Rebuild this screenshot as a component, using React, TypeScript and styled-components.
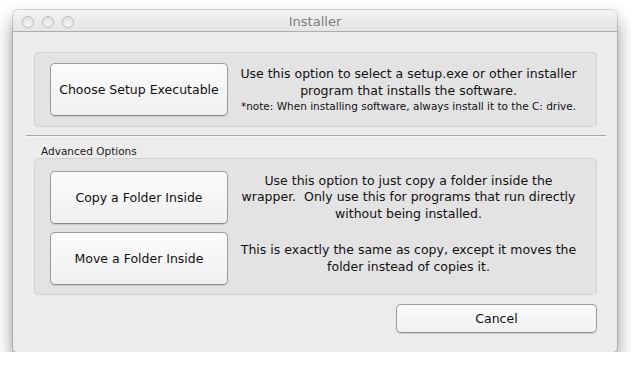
import styled, { createGlobalStyle } from "styled-components";

const GlobalStyle = createGlobalStyle`
  * {
    box-sizing: border-box;
  }

  html, body {
    margin: 0;
    padding: 0;
    background: #ffffff;
    font-family: "Lucida Grande", "DejaVu Sans", sans-serif;
    -webkit-font-smoothing: antialiased;
  }
`;

interface Option {
  id: string;
  label: string;
  lines: string[];
  note?: string;
}

const ADVANCED: Option[] = [
  {
    id: "copy",
    label: "Copy a Folder Inside",
    lines: [
      "Use this option to just copy a folder inside the",
      "wrapper.\u00a0 Only use this for programs that run directly",
      "without being installed.",
    ],
  },
  {
    id: "move",
    label: "Move a Folder Inside",
    lines: [
      "This is exactly the same as copy, except it moves the",
      "folder instead of copies it.",
    ],
  },
];

const OptionRow = ({ option }: { option: Option }) => (
  <Row>
    <BigButton>{option.label}</BigButton>
    <Description>
      {option.lines.map((line) => (
        <Line key={line}>{line}</Line>
      ))}
      {option.note && <Note>{option.note}</Note>}
    </Description>
  </Row>
);

const App = () => {
  return (
    <>
      <GlobalStyle />
      <Window>
        {/* Title bar */}
        <TitleBar>
          <Lights>
            <Light />
            <Light />
            <Light />
          </Lights>
          <Title>Installer</Title>
        </TitleBar>

        <Content>
          <GroupBox>
            <OptionRow
              option={{
                id: "setup",
                label: "Choose Setup Executable",
                lines: [
                  "Use this option to select a setup.exe or other installer",
                  "program that installs the software.",
                ],
                note: "*note: When installing software, always install it to the C: drive.",
              }}
            />
          </GroupBox>

          <Separator />

          <GroupLabel>Advanced Options</GroupLabel>
          <GroupBox $advanced>
            {ADVANCED.map((option) => (
              <OptionRow key={option.id} option={option} />
            ))}
          </GroupBox>

          <Footer>
            <CancelButton>Cancel</CancelButton>
          </Footer>
        </Content>
      </Window>
    </>
  );
};

export default App;

// Styled Components
const Window = styled.div`
  margin: 10px 0 0 13px;
  width: 604px;
  height: 342px;
  background: #ececec;
  border-radius: 5px 5px 4px 4px;
  box-shadow: 0 0 0 1px rgba(0, 0, 0, 0.14), 0 10px 18px rgba(0, 0, 0, 0.45);
  display: flex;
  flex-direction: column;
  overflow: hidden;
`;

const TitleBar = styled.div`
  height: 22px;
  flex-shrink: 0;
  background: linear-gradient(#f3f3f3, #e4e4e4);
  border-bottom: 1px solid #acacac;
  display: flex;
  align-items: center;
  justify-content: center;
  position: relative;
`;

const Lights = styled.div`
  position: absolute;
  left: 9px;
  top: 6px;
  display: flex;
  gap: 8px;
`;

const Light = styled.span`
  width: 12px;
  height: 12px;
  border-radius: 50%;
  border: 1px solid #b9b9b9;
  background: linear-gradient(#e2e2e2, #f4f4f4);
`;

const Title = styled.span`
  font-size: 13px;
  color: #7d7d7d;
  padding-top: 1px;
`;

const Content = styled.div`
  flex: 1;
  display: flex;
  flex-direction: column;
  padding: 20px 20px 0 21px;
`;

const GroupBox = styled.div<{ $advanced?: boolean }>`
  background: #e3e3e3;
  border: 1px solid #d2d2d2;
  border-radius: 4px;
  padding: ${(props) => (props.$advanced ? "12px 15px 9px" : "10px 15px")};
  display: flex;
  flex-direction: column;
  gap: 8px;
`;

const Row = styled.div`
  display: flex;
  align-items: center;
  gap: 8px;
`;

const BigButton = styled.div`
  width: 178px;
  height: 53px;
  flex-shrink: 0;
  display: flex;
  align-items: center;
  justify-content: center;
  font-size: 12.5px;
  color: #111111;
  background: linear-gradient(#fbfbfb, #f0f0f0);
  border: 1px solid #9c9c9c;
  border-bottom-color: #8a8a8a;
  border-radius: 5px;
  box-shadow: 0 1px 1px rgba(0, 0, 0, 0.12);
`;

const Description = styled.div`
  flex: 1;
  display: flex;
  flex-direction: column;
  align-items: center;
  text-align: center;
  color: #111111;
`;

const Line = styled.span`
  font-size: 12.5px;
  line-height: 16.5px;
  white-space: nowrap;
`;

const Note = styled.span`
  font-size: 10.5px;
  line-height: 14px;
  white-space: nowrap;
`;

const Separator = styled.div`
  height: 1px;
  margin: 8px -9px 0 -8px;
  background: #a6a6a6;
  border-bottom: 1px solid #f6f6f6;
  box-sizing: content-box;
`;

const GroupLabel = styled.div`
  font-size: 10.5px;
  color: #1a1a1a;
  line-height: 13px;
  margin: 8px 0 0 7px;
`;

const Footer = styled.div`
  display: flex;
  justify-content: flex-end;
  margin-top: 9px;
`;

const CancelButton = styled.div`
  width: 201px;
  height: 29px;
  display: flex;
  align-items: center;
  justify-content: center;
  font-size: 12.5px;
  color: #111111;
  background: linear-gradient(#fbfbfb, #f0f0f0);
  border: 1px solid #9c9c9c;
  border-bottom-color: #8a8a8a;
  border-radius: 5px;
  box-shadow: 0 1px 1px rgba(0, 0, 0, 0.12);
`;
